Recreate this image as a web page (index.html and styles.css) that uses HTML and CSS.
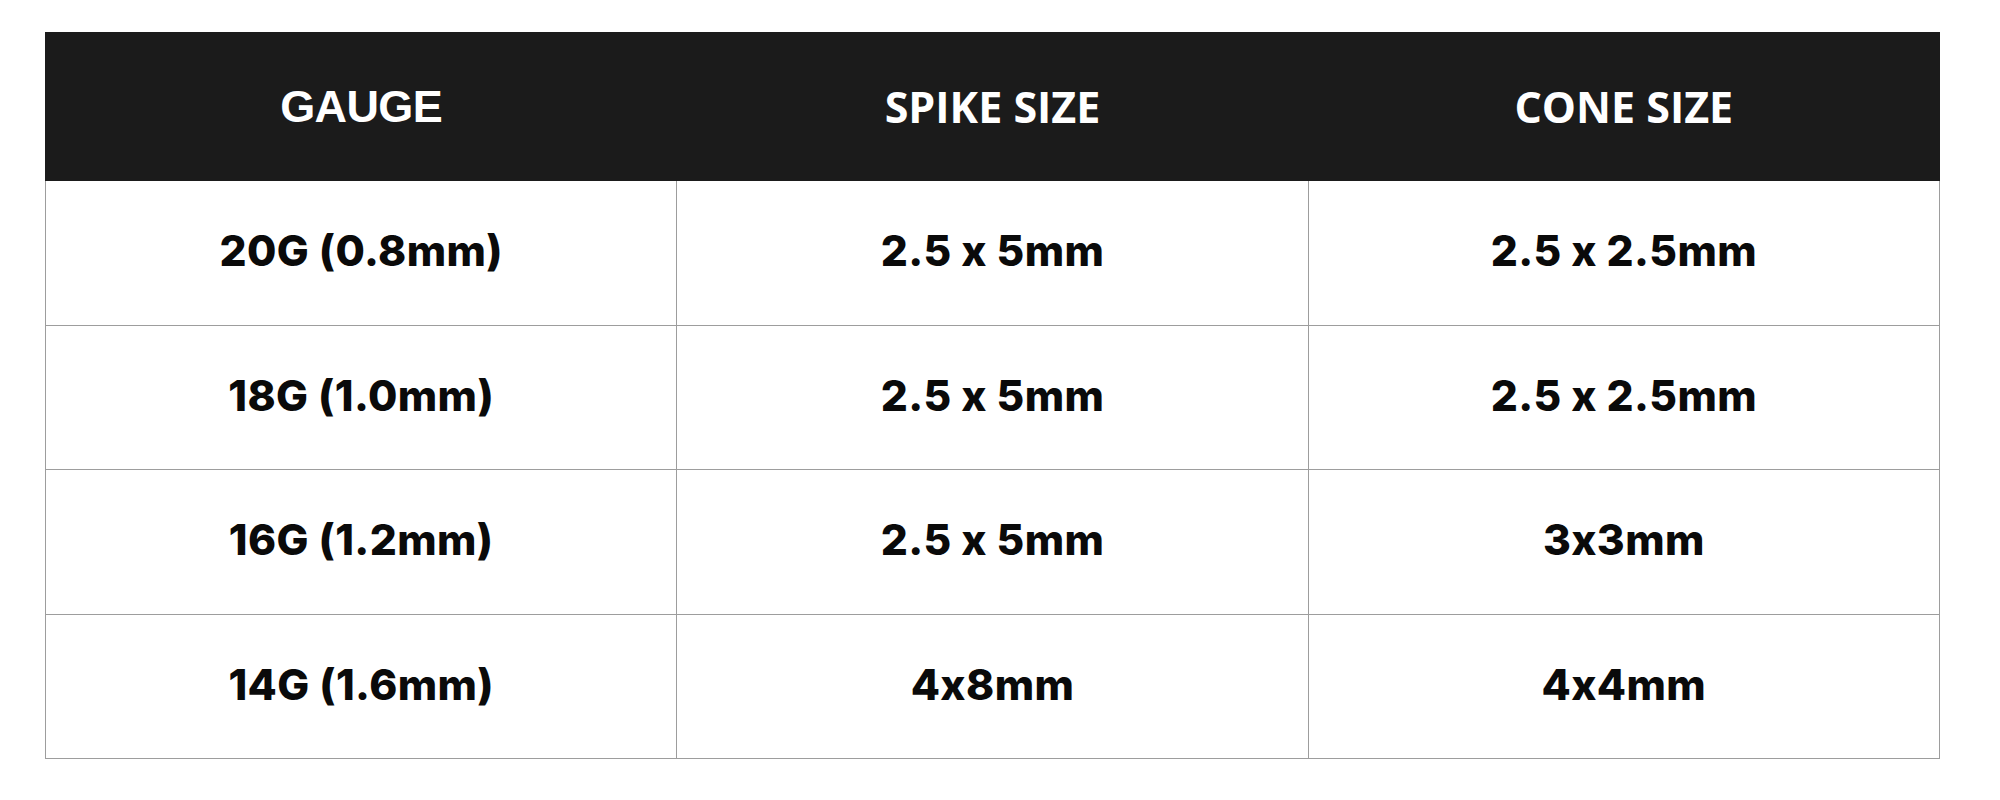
FILE: index.html
```html
<!DOCTYPE html>
<html lang="en">
<head>
<meta charset="utf-8">
<title>Gauge sizes</title>
<link rel="stylesheet" href="styles.css">
</head>
<body>
<table class="size-table">
  <thead>
    <tr>
      <th class="head head-gauge">GAUGE</th>
      <th class="head">SPIKE SIZE</th>
      <th class="head">CONE SIZE</th>
    </tr>
  </thead>
  <tbody>
    <tr><td>20G (0.8mm)</td><td>2.5 x 5mm</td><td>2.5 x 2.5mm</td></tr>
    <tr><td>18G (1.0mm)</td><td>2.5 x 5mm</td><td>2.5 x 2.5mm</td></tr>
    <tr><td>16G (1.2mm)</td><td>2.5 x 5mm</td><td>3x3mm</td></tr>
    <tr><td>14G (1.6mm)</td><td>4x8mm</td><td>4x4mm</td></tr>
  </tbody>
</table>
</body>
</html>
```
FILE: styles.css
```css
html, body {
  margin: 0;
  background: #ffffff;
}
body {
  padding: 32px 0 0 45px;
}
.size-table {
  width: 1895px;
  border-collapse: collapse;
  table-layout: fixed;
}
.size-table th,
.size-table td {
  text-align: center;
  vertical-align: middle;
  padding: 0;
}
.size-table thead tr {
  height: 148px;
}
.head {
  background: #1b1b1b;
  color: #ffffff;
  font-family: "Open Sans", sans-serif;
  font-weight: 700;
  font-size: 43px;
  border: 1px solid #1b1b1b;
  border-left-color: #131313;
}
.head:first-child {
  border-left-color: #1b1b1b;
}
.head-gauge {
  font-family: "Liberation Sans", Arial, sans-serif;
  font-weight: 700;
  font-size: 45px;
  letter-spacing: -0.6px;
}
.size-table tbody tr {
  height: 144.5px;
}
.size-table td {
  border: 1px solid #9d9d9d;
  color: #0a0a0a;
  font-family: Inter, sans-serif;
  font-weight: 800;
  font-size: 42.5px;
  letter-spacing: 0.4px;
  padding-bottom: 4px;
}
```
